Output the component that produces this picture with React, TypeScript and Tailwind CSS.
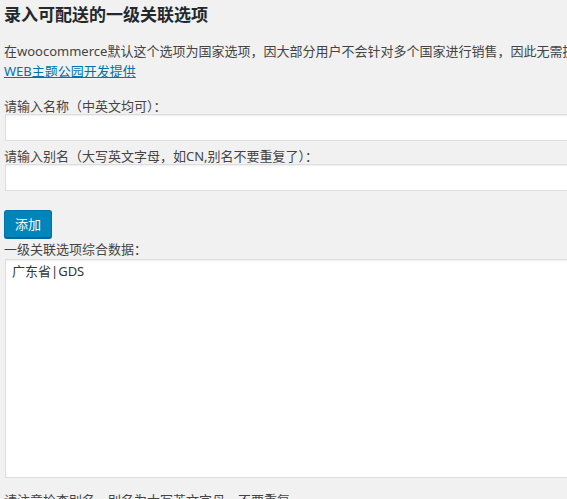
import React from "react";

const font = "font-['Noto_Sans','Noto_Sans_CJK_SC',sans-serif]";

export default function App() {
  return (
    <div className={`min-h-screen w-full overflow-hidden bg-[#f1f1f1] text-[13px] text-[#444] ${font}`}>
      <div className="w-[1000px] pl-[4px] pt-[3px]">
        <h3 className="text-[17px] font-bold leading-[24px] text-[#23282d]">录入可配送的一级关联选项</h3>

        <p className="mt-[15px] whitespace-nowrap leading-[19.5px]">
          在woocommerce默认这个选项为国家选项，因大部分用户不会针对多个国家进行销售，因此无需提供多个国家的选择，可以将此选项改为省份
          <br />
          <a href="#" className="text-[#0073aa] underline">WEB主题公园开发提供</a>
        </p>

        <label className="mt-[17px] block leading-[16px]">请输入名称（中英文均可）：</label>
        <input
          type="text"
          className="ml-px block h-[27px] w-[900px] border border-[#ddd] bg-white px-[6px] shadow-[inset_0_1px_2px_rgba(0,0,0,0.07)] outline-none"
        />

        <label className="mt-[7px] block leading-[16px]">请输入别名（大写英文字母，如CN,别名不要重复了）：</label>
        <input
          type="text"
          className="ml-px block h-[27px] w-[900px] border border-[#ddd] bg-white px-[6px] shadow-[inset_0_1px_2px_rgba(0,0,0,0.07)] outline-none"
        />

        <button
          type="button"
          className="mt-[19px] block h-[28px] rounded-[3px] border border-[#0073aa] border-b-[#006799] bg-[#0085ba] px-[10px] leading-[26px] text-white shadow-[0_1px_0_#006799]"
        >
          添加
        </button>

        <label className="mt-[2px] block leading-[18px]">一级关联选项综合数据：</label>
        <textarea
          readOnly
          defaultValue="广东省|GDS"
          className="ml-px mt-px block h-[219px] w-[900px] resize-none border border-[#ddd] bg-white px-[6px] py-[2px] leading-[18px] text-[#32373c] shadow-[inset_0_1px_2px_rgba(0,0,0,0.07)] outline-none"
        />

        <p className="mt-[13px] leading-[19.5px]">请注意检查别名，别名为大写英文字母，不要重复</p>
      </div>
    </div>
  );
}
